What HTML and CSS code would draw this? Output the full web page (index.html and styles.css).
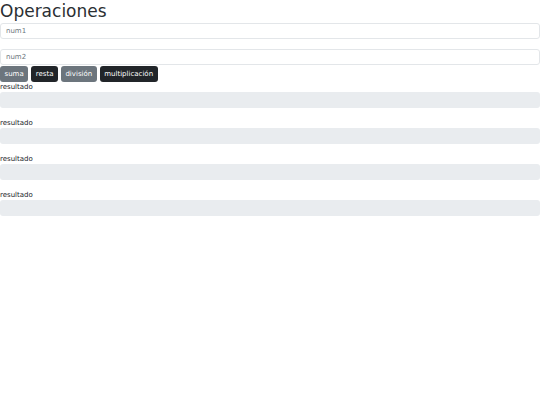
FILE: index.html
```html
<!DOCTYPE html>
<html lang="es">
<head>
<meta charset="utf-8">
<link rel="stylesheet" href="styles.css">
</head>
<body>
<h1 class="title">Operaciones</h1>
<input class="field first" type="text" placeholder="num1">
<input class="field" type="text" placeholder="num2">
<div class="buttons">
  <button class="btn grey">suma</button>
  <button class="btn dark">resta</button>
  <button class="btn grey">división</button>
  <button class="btn dark">multiplicación</button>
</div>
<div class="result">
  <label class="label">resultado</label>
  <div class="out"></div>
</div>
<div class="result">
  <label class="label">resultado</label>
  <div class="out"></div>
</div>
<div class="result">
  <label class="label">resultado</label>
  <div class="out"></div>
</div>
<div class="result">
  <label class="label">resultado</label>
  <div class="out"></div>
</div>
</body>
</html>
```
FILE: styles.css
```css
* { box-sizing: border-box; }
body {
  margin: 0;
  font-family: "DejaVu Sans", sans-serif;
  color: #212529;
  background: #fff;
}
.title {
  margin: 0;
  font-size: 17px;
  font-weight: 400;
  line-height: 23px;
  height: 23px;
  color: #2b2f33;
}
.field {
  display: block;
  width: 100%;
  height: 16px;
  margin: 0 0 10px 0;
  padding: 0 5px;
  border: 1px solid #e3e6e9;
  border-radius: 3px;
  font-family: "DejaVu Sans", sans-serif;
  font-size: 7px;
  color: #212529;
  background: #fff;
}
.field::placeholder { color: #6c757d; }
.field + .field { margin-bottom: 1px; }
.buttons {
  display: flex;
  gap: 3px;
}
.btn {
  height: 16px;
  padding: 0 4.5px;
  border: none;
  border-radius: 3px;
  font-family: "DejaVu Sans", sans-serif;
  font-size: 7px;
  color: #fff;
}
.grey { background: #6c757d; }
.dark { background: #212529; }
.result { margin-bottom: 10px; }
.label {
  display: block;
  font-size: 7px;
  line-height: 9px;
  height: 10px;
  padding-top: 1px;
}
.out {
  height: 16px;
  background: #e9ecef;
  border-radius: 3px;
}
```
